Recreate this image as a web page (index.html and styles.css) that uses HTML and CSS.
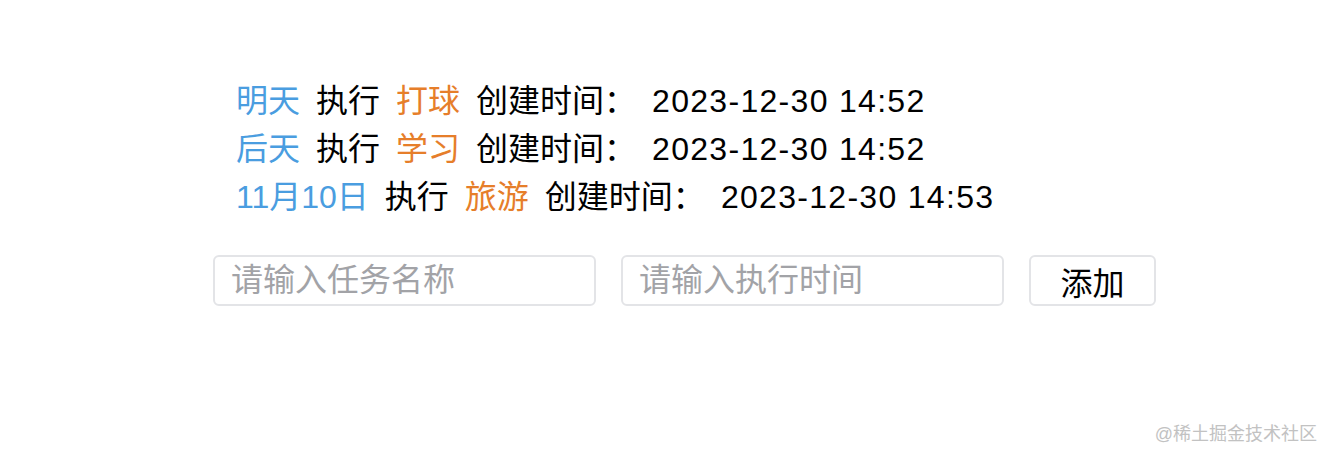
FILE: index.html
```html
<!DOCTYPE html>
<html lang="zh-CN">
<head>
<meta charset="utf-8">
<title>Todo</title>
<link rel="stylesheet" href="styles.css">
</head>
<body>
<div class="app">
  <ul class="list">
    <li class="row"><span class="date">明天</span><span>执行</span><span class="task">打球</span><span>创建时间：</span><span class="time">2023-12-30 14:52</span></li>
    <li class="row"><span class="date">后天</span><span>执行</span><span class="task">学习</span><span>创建时间：</span><span class="time">2023-12-30 14:52</span></li>
    <li class="row"><span class="date">11月10日</span><span>执行</span><span class="task">旅游</span><span>创建时间：</span><span class="time">2023-12-30 14:53</span></li>
  </ul>
  <div class="form">
    <input class="field" type="text" placeholder="请输入任务名称">
    <input class="field" type="text" placeholder="请输入执行时间">
    <button class="btn" type="button">添加</button>
  </div>
</div>
<div class="mark">@稀土掘金技术社区</div>
</body>
</html>
```
FILE: styles.css
```css
html, body {
  margin: 0;
  padding: 0;
  background: #fff;
}
body {
  width: 1324px;
  height: 450px;
  position: relative;
  overflow: hidden;
  font-family: "Liberation Sans", "Noto Sans CJK SC", sans-serif;
  color: #000;
}
.app {
  padding: 77px 0 0 213px;
}
.list {
  list-style: none;
  margin: 0;
  padding: 0 0 0 23px;
}
.row {
  display: flex;
  gap: 16px;
  font-size: 32px;
  line-height: 48px;
  height: 48px;
}
.date { color: #4a9de0; }
.task { color: #e67e2a; }
.time {
  letter-spacing: 1.3px;
}
.form {
  display: flex;
  gap: 25px;
  margin-top: 34px;
}
.field {
  box-sizing: border-box;
  width: 383px;
  height: 51px;
  border: 2px solid #e3e4e7;
  border-radius: 6px;
  padding: 0 16px;
  font-family: "Liberation Sans", "Noto Sans CJK SC", sans-serif;
  font-size: 32px;
  color: #333;
  outline: none;
  background: #fff;
}
.field::placeholder { color: #a2a3a7; }
.btn {
  box-sizing: border-box;
  width: 127px;
  height: 51px;
  border: 2px solid #e3e4e7;
  border-radius: 6px;
  background: #fff;
  font-family: "Liberation Sans", "Noto Sans CJK SC", sans-serif;
  font-size: 32px;
  color: #000;
  padding: 0;
}
.mark {
  position: absolute;
  right: 7px;
  bottom: 5px;
  font-size: 18px;
  color: #c2c2c2;
  font-family: "Liberation Sans", "Noto Sans CJK SC", sans-serif;
}
```
